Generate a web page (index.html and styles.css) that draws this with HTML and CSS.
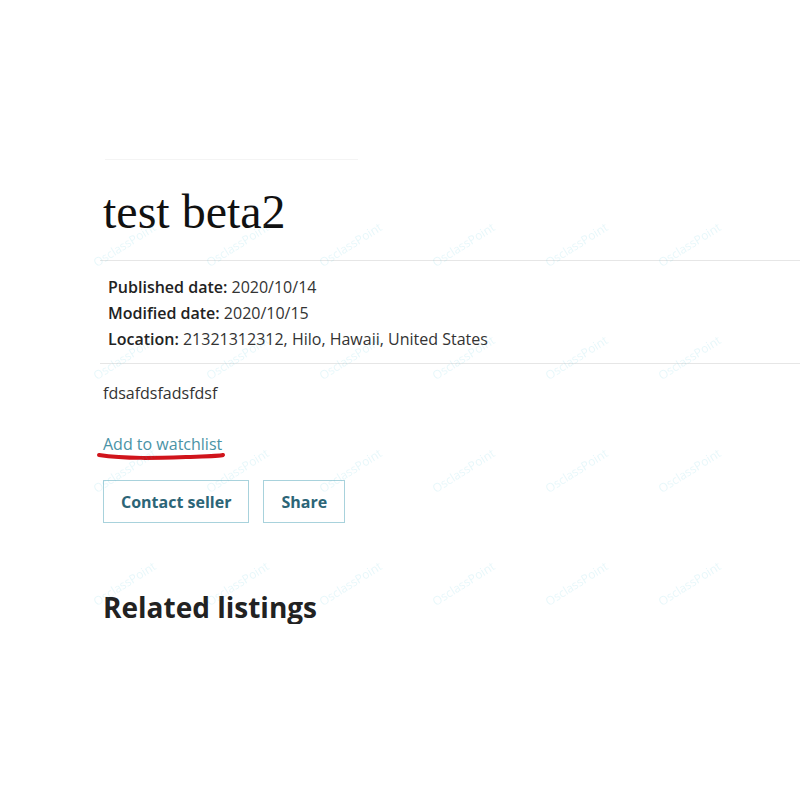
FILE: index.html
```html
<!DOCTYPE html>
<html lang="en">
<head>
  <meta charset="UTF-8" />
  <meta name="viewport" content="width=device-width, initial-scale=1" />
  <title>test beta2</title>
  <link rel="stylesheet" href="styles.css">
</head>
<body>

  <div class="page">
    <div class="top-rule"></div>

    <h1 class="item-title">test beta2</h1>

    <div class="item-meta">
      <div><b>Published date:</b> 2020/10/14</div>
      <div><b>Modified date:</b> 2020/10/15</div>
      <div><b>Location:</b> 21321312312, Hilo, Hawaii, United States</div>
    </div>

    <p class="item-desc">fdsafdsfadsfdsf</p>

    <div class="watch">
      <a href="#" class="watch-link">Add to watchlist</a>
      <!-- hand drawn marker -->
      <svg class="marker" width="132" height="12" viewBox="0 0 132 12">
        <path d="M3 5 C 30 9, 60 8, 90 7 S 124 6, 127 5" stroke="#d0141b" stroke-width="4" fill="none" stroke-linecap="round"/>
      </svg>
    </div>

    <div class="actions">
      <button class="btn">Contact seller</button>
      <button class="btn">Share</button>
    </div>

    <h2 class="related">Related listings</h2>
  </div>

  <!-- Watermark -->
  <div class="watermark">
    <span>OsclassPoint</span><span>OsclassPoint</span><span>OsclassPoint</span><span>OsclassPoint</span><span>OsclassPoint</span><span>OsclassPoint</span>
    <span>OsclassPoint</span><span>OsclassPoint</span><span>OsclassPoint</span><span>OsclassPoint</span><span>OsclassPoint</span><span>OsclassPoint</span>
    <span>OsclassPoint</span><span>OsclassPoint</span><span>OsclassPoint</span><span>OsclassPoint</span><span>OsclassPoint</span><span>OsclassPoint</span>
    <span>OsclassPoint</span><span>OsclassPoint</span><span>OsclassPoint</span><span>OsclassPoint</span><span>OsclassPoint</span><span>OsclassPoint</span>
  </div>

</body>
</html>
```

FILE: styles.css
```css
body {
  margin: 0;
  background: #fff;
  font-family: "Open Sans", Arial, sans-serif;
  color: #333;
  overflow: hidden;
}

.page {
  padding: 159px 0 0 103px;
}

.top-rule {
  width: 253px;
  margin-left: 2px;
  border-top: 1px solid #f4f4f4;
}

.item-title {
  font-family: "Liberation Serif", "Times New Roman", serif;
  font-weight: normal;
  font-size: 48px;
  line-height: 56px;
  color: #111;
  margin: 24px 0 0 0;
}

.item-meta {
  margin: 20px 0 0 -3px;
  padding: 13px 0 11px 8px;
  border-top: 1px solid #e6e6e6;
  border-bottom: 1px solid #e6e6e6;
  font-size: 16px;
  line-height: 26px;
  color: #333;
}

.item-meta b {
  font-weight: 600;
  color: #222;
}

.item-desc {
  margin: 18px 0 0 0;
  font-size: 16px;
  line-height: 22px;
  color: #333;
}

.watch {
  position: relative;
  margin-top: 29px;
  line-height: 22px;
}

.watch-link {
  font-size: 16px;
  color: #4a93a6;
  text-decoration: none;
}

.marker {
  position: absolute;
  left: -7px;
  top: 17px;
}

.actions {
  display: flex;
  gap: 14px;
  margin-top: 25px;
}

.btn {
  font-family: "Open Sans", Arial, sans-serif;
  font-size: 16px;
  font-weight: bold;
  color: #2c6577;
  background: #fff;
  border: 1px solid #a8d2dc;
  height: 43px;
  padding: 0 17px;
  cursor: pointer;
}

.related {
  font-size: 28px;
  font-weight: bold;
  color: #222;
  margin: 67px 0 0 0;
  line-height: 34px;
}

/* Watermark overlay */
.watermark {
  position: fixed;
  left: 68px;
  top: 188px;
  display: grid;
  grid-template-columns: repeat(6, 113px);
  grid-auto-rows: 113px;
  pointer-events: none;
}

.watermark span {
  display: flex;
  align-items: center;
  justify-content: center;
  font-size: 12px;
  color: rgba(60, 190, 210, 0.12);
  transform: rotate(-32deg);
}
```
